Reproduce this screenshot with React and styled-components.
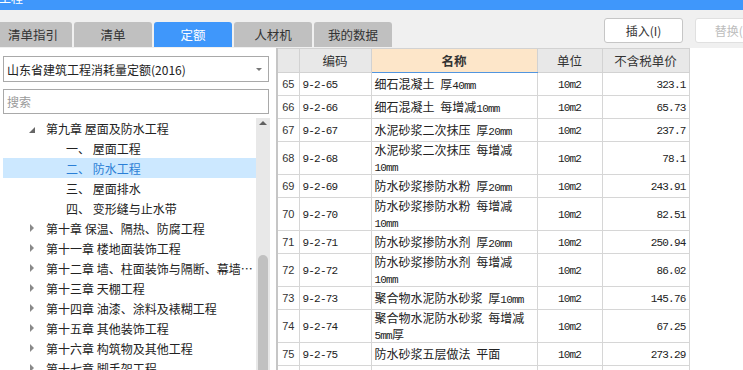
import styled, { createGlobalStyle } from 'styled-components'

const GlobalStyle = createGlobalStyle`
  html, body { margin: 0; padding: 0; overflow: hidden; }
  body {
    background: #fff;
    font-family: "Noto Sans CJK SC", "Liberation Sans", sans-serif;
    font-size: 12px;
    color: #222;
  }
`

const tabs = ['清单指引', '清单', '定额', '人材机', '我的数据']

const tree = [
  { level: 0, label: '第九章 屋面及防水工程', open: true },
  { level: 1, label: '一、 屋面工程' },
  { level: 1, label: '二、 防水工程', active: true },
  { level: 1, label: '三、 屋面排水' },
  { level: 1, label: '四、 变形缝与止水带' },
  { level: 0, label: '第十章 保温、隔热、防腐工程' },
  { level: 0, label: '第十一章 楼地面装饰工程' },
  { level: 0, label: '第十二章 墙、柱面装饰与隔断、幕墙工程' },
  { level: 0, label: '第十三章 天棚工程' },
  { level: 0, label: '第十四章 油漆、涂料及裱糊工程' },
  { level: 0, label: '第十五章 其他装饰工程' },
  { level: 0, label: '第十六章 构筑物及其他工程' },
  { level: 0, label: '第十七章 脚手架工程' },
]

const rows = [
  ['65', '9-2-65', ['细石混凝土 厚40mm'], '323.1'],
  ['66', '9-2-66', ['细石混凝土 每增减10mm'], '65.73'],
  ['67', '9-2-67', ['水泥砂浆二次抹压 厚20mm'], '237.7'],
  ['68', '9-2-68', ['水泥砂浆二次抹压 每增减', '10mm'], '78.1'],
  ['69', '9-2-69', ['防水砂浆掺防水粉 厚20mm'], '243.91'],
  ['70', '9-2-70', ['防水砂浆掺防水粉 每增减', '10mm'], '82.51'],
  ['71', '9-2-71', ['防水砂浆掺防水剂 厚20mm'], '250.94'],
  ['72', '9-2-72', ['防水砂浆掺防水剂 每增减', '10mm'], '86.02'],
  ['73', '9-2-73', ['聚合物水泥防水砂浆 厚10mm'], '145.76'],
  ['74', '9-2-74', ['聚合物水泥防水砂浆 每增减', '5mm厚'], '67.25'],
  ['75', '9-2-75', ['防水砂浆五层做法 平面'], '273.29'],
  ['76', '9-2-76', ['防水砂浆五层做法 立面'], ''],
]

// latin runs (digits, units, spaces) use the narrow mono face like the original grid
function mixText(text) {
  return text.split(/([0-9a-z. ]+)/).map((part, i) =>
    /^[0-9a-z. ]+$/.test(part) ? <Mono key={i}>{part}</Mono> : part
  )
}

export default function App() {
  return (
    <>
      <GlobalStyle />
      <TitleBar><TitleText>工程</TitleText></TitleBar>
      <Toolbar>
        <TabStrip>
          {tabs.map(t => <Tab key={t} $active={t === '定额'}>{t}</Tab>)}
        </TabStrip>
        <Buttons>
          <Button>插入(I)</Button>
          <Button $disabled>替换(R)</Button>
        </Buttons>
      </Toolbar>
      <Main>
        <LeftPanel>
          <Select>
            <span>山东省建筑工程消耗量定额(2016)</span>
            <DownArrow />
          </Select>
          <Search placeholder="搜索" />
          <TreeArea>
            <TreeList>
              {tree.map((n, i) => (
                <TreeRow key={i} $level={n.level} $active={n.active}>
                  {n.level === 0 && (
                    <Expander>{n.open ? <OpenMark /> : <ClosedMark />}</Expander>
                  )}
                  <Label>{n.label}</Label>
                </TreeRow>
              ))}
            </TreeList>
            <ScrollTrack>
              <UpArrow />
              <Thumb />
            </ScrollTrack>
          </TreeArea>
        </LeftPanel>
        <GridWrap>
          <Grid>
            <colgroup>
              <col style={{ width: 22 }} />
              <col style={{ width: 72 }} />
              <col style={{ width: 166 }} />
              <col style={{ width: 65 }} />
              <col style={{ width: 87 }} />
            </colgroup>
            <thead>
              <tr>
                <Th />
                <Th>编码</Th>
                <Th $accent>名称</Th>
                <Th>单位</Th>
                <Th>不含税单价</Th>
              </tr>
            </thead>
            <tbody>
              {rows.map(r => (
                <tr key={r[0]}>
                  <NumCell $tall={r[2].length > 1}>{r[0]}</NumCell>
                  <Td><Mono>{r[1]}</Mono></Td>
                  <Td>
                    {r[2].map((line, i) => <NameLine key={i}>{mixText(line)}</NameLine>)}
                  </Td>
                  <Td $align="center"><Mono>10m2</Mono></Td>
                  <Td $align="right"><Mono>{r[3]}</Mono></Td>
                </tr>
              ))}
            </tbody>
          </Grid>
        </GridWrap>
      </Main>
    </>
  )
}

const TitleBar = styled.div`
  height: 10px;
  background: #3f97fb;
  overflow: hidden;
`

const TitleText = styled.div`
  color: #fff;
  font-size: 12px;
  line-height: 12px;
  margin-top: -8px;
  margin-left: -1px;
`

const Toolbar = styled.div`
  height: 38px;
  background: #f0f0f0;
  display: flex;
  overflow: hidden;
`

const TabStrip = styled.div`
  display: flex;
  gap: 2px;
  margin-left: -6px;
  margin-top: 12px;
  flex-shrink: 0;
`

const Tab = styled.div`
  width: 78px;
  height: 25px;
  display: flex;
  align-items: center;
  justify-content: center;
  border-radius: 3px 3px 0 0;
  background: ${p => (p.$active ? '#3f97fb' : '#c0c0c0')};
  color: ${p => (p.$active ? '#fff' : '#333')};
  font-size: 12.5px;
`

const Buttons = styled.div`
  display: flex;
  gap: 12px;
  margin-left: 212px;
  margin-top: 8px;
  flex-shrink: 0;
`

const Button = styled.div`
  width: 79px;
  height: 25px;
  box-sizing: border-box;
  display: flex;
  align-items: center;
  justify-content: center;
  background: #fff;
  border: 1px solid ${p => (p.$disabled ? '#e0e0e0' : '#c6c6c6')};
  border-radius: 3px;
  color: ${p => (p.$disabled ? '#bdbdbd' : '#333')};
  font-size: 12px;
`

const Main = styled.div`
  display: flex;
  height: 322px;
  background: #fff;
  overflow: hidden;
`

const LeftPanel = styled.div`
  width: 276px;
  flex-shrink: 0;
  box-sizing: border-box;
  padding: 8px 0 0 3px;
  display: flex;
  flex-direction: column;
`

const Select = styled.div`
  width: 266px;
  height: 26px;
  box-sizing: border-box;
  border: 1px solid #a9a9a9;
  padding: 0 6px 0 3px;
  display: flex;
  align-items: center;
  justify-content: space-between;
  color: #222;
`

const DownArrow = styled.span`
  width: 0;
  height: 0;
  border-left: 3px solid transparent;
  border-right: 3px solid transparent;
  border-top: 3px solid #777;
`

const Search = styled.input`
  margin-top: 7px;
  width: 266px;
  height: 25px;
  box-sizing: border-box;
  border: 1px solid #a9a9a9;
  padding: 0 3px;
  font: inherit;
  outline: none;
  &::placeholder { color: #9a9a9a; }
`

const TreeArea = styled.div`
  margin-top: 4px;
  flex: 1;
  display: flex;
  min-height: 0;
`

const TreeList = styled.div`
  width: 253px;
  overflow: hidden;
`

const TreeRow = styled.div`
  height: 20px;
  display: flex;
  align-items: center;
  padding-left: ${p => (p.$level === 0 ? 27 : 63)}px;
  background: ${p => (p.$active ? '#cce8ff' : 'transparent')};
  color: ${p => (p.$active ? '#2b7fd6' : '#222')};
`

const Expander = styled.span`
  width: 16px;
  flex-shrink: 0;
  display: flex;
  align-items: center;
`

const ClosedMark = styled.span`
  width: 0;
  height: 0;
  border-top: 4px solid transparent;
  border-bottom: 4px solid transparent;
  border-left: 4px solid #8a8a8a;
`

const OpenMark = styled.span`
  width: 0;
  height: 0;
  margin-left: -1px;
  margin-top: 3px;
  border-left: 6px solid transparent;
  border-bottom: 6px solid #666;
`

const Label = styled.span`
  flex: 1;
  min-width: 0;
  white-space: nowrap;
  overflow: hidden;
  text-overflow: ellipsis;
`

const ScrollTrack = styled.div`
  width: 14px;
  background: #e8e8e8;
  display: flex;
  flex-direction: column;
  align-items: center;
`

const UpArrow = styled.span`
  margin-top: 3px;
  width: 0;
  height: 0;
  border-left: 4px solid transparent;
  border-right: 4px solid transparent;
  border-bottom: 4px solid #606060;
`

const Thumb = styled.div`
  margin-top: auto;
  width: 10px;
  height: 115px;
  background: #c1c1c1;
  border-radius: 5px 5px 0 0;
`

const GridWrap = styled.div`
  flex-shrink: 0;
  overflow: hidden;
  height: 322px;
`

const Grid = styled.table`
  border-collapse: collapse;
  table-layout: fixed;
  width: 412px;
  border-left: 2px solid #c6c6c6;
`

const Th = styled.th`
  height: 23px;
  padding: 0;
  background: ${p => (p.$accent ? '#fde6c9' : '#e8e8e8')};
  border: 1px solid #d2d2d2;
  border-bottom: 1px solid ${p => (p.$accent ? '#5195df' : '#d2d2d2')};
  font-weight: ${p => (p.$accent ? 700 : 400)};
  font-size: 12.5px;
  color: #333;
`

const Td = styled.td`
  padding: 0 3px;
  border: 1px solid #d6d6d6;
  text-align: ${p => p.$align || 'left'};
  vertical-align: middle;
  white-space: nowrap;
  line-height: 14px;
  color: #222;
`

const NumCell = styled(Td)`
  height: ${p => (p.$tall ? 32 : 22)}px;
  padding: 0;
  text-align: center;
  font-family: "Liberation Sans", sans-serif;
  font-size: 11px;
  color: #333;
`

const NameLine = styled.div`
  height: 16px;
  line-height: 16px;
  font-size: 12px;
`

const Mono = styled.span`
  font-family: "Liberation Mono", monospace;
  font-size: 11px;
  letter-spacing: -0.8px;
  white-space: pre;
`
